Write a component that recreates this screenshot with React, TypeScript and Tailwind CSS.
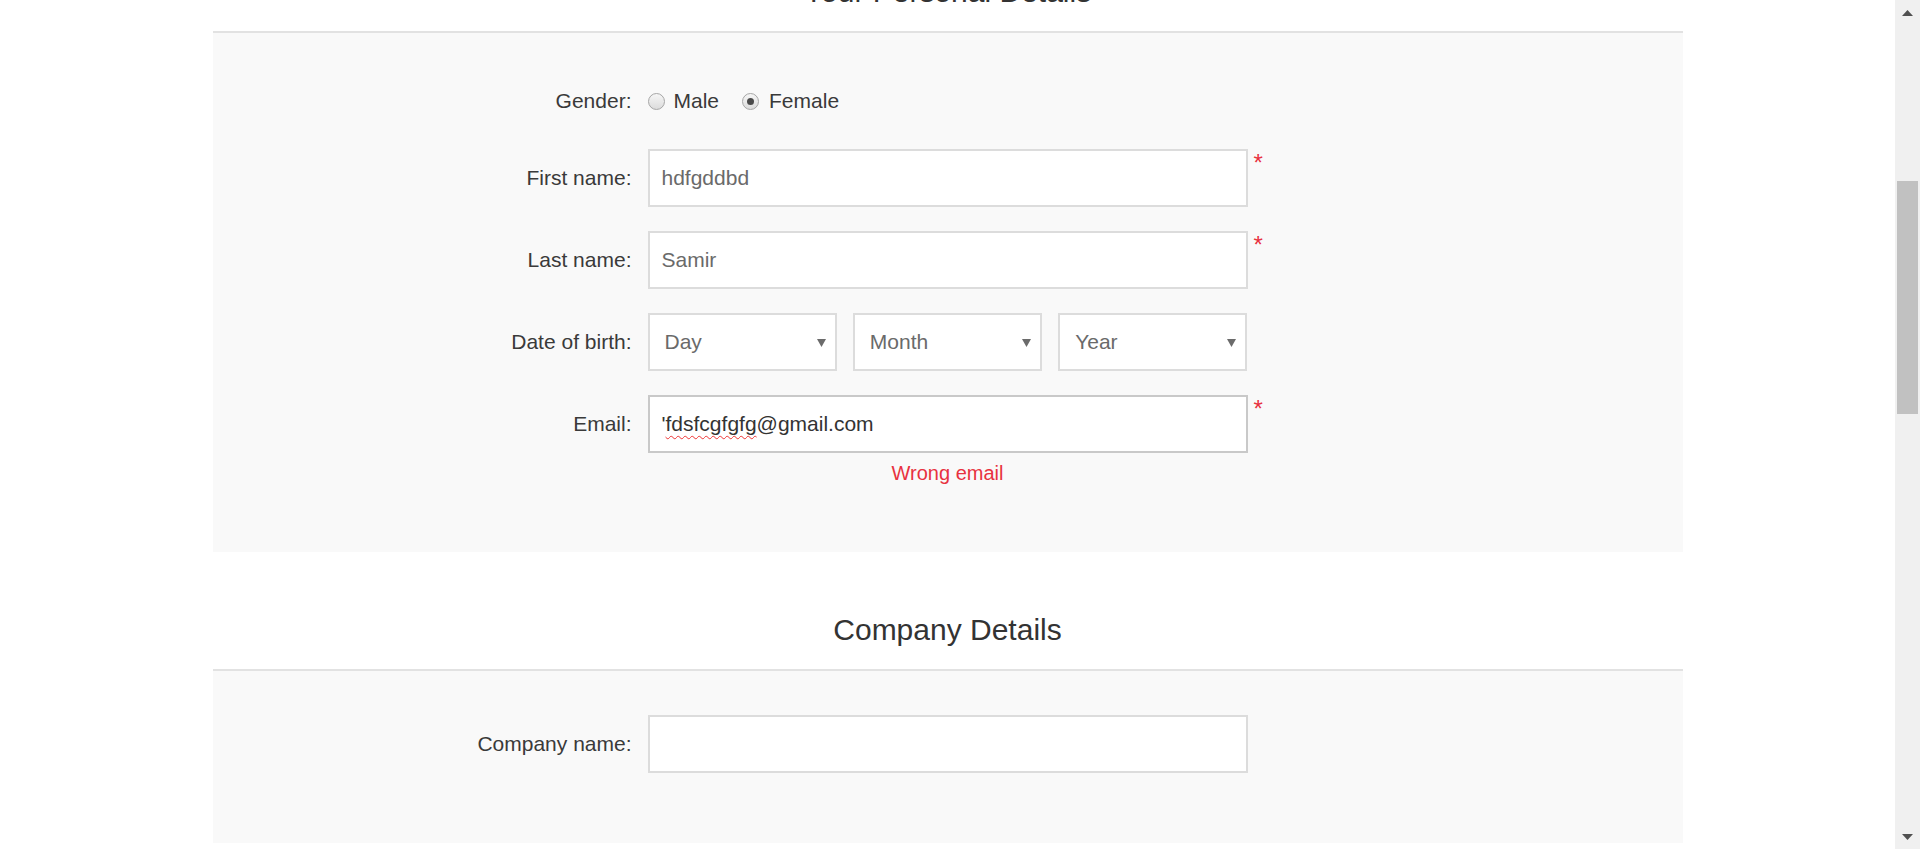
import React from "react";

function Radio({ checked }: { checked?: boolean }) {
  return (
    <span className="flex h-[17px] w-[17px] items-center justify-center rounded-full border border-[#a6a6a6] bg-gradient-to-b from-[#f6f6f6] to-[#dcdcdc]">
      {checked && <span className="h-[7px] w-[7px] rounded-full bg-[#4a4a4a]" />}
    </span>
  );
}

function Asterisk() {
  return <span className="ml-[6px] mt-[2px] text-[24px] leading-none text-[#e8323f]">*</span>;
}

function Row({
  label,
  required,
  children,
  className = "h-[58px]",
}: {
  label: string;
  required?: boolean;
  children: React.ReactNode;
  className?: string;
}) {
  return (
    <div className={`grid grid-cols-[1fr_600px_1fr] ${className}`}>
      <div className="flex items-center justify-end pr-4 text-[21px] text-[#3a3a3a]">{label}</div>
      <div className="flex h-full">{children}</div>
      <div className="flex items-start">{required && <Asterisk />}</div>
    </div>
  );
}

function TextBox({ value, dark }: { value?: React.ReactNode; dark?: boolean }) {
  return (
    <div
      className={`flex h-full w-full items-center border-2 bg-white px-3 text-[21px] ${
        dark ? "border-[#c9c9c9] text-[#333]" : "border-[#dcdcdc] text-[#6a6a6a]"
      }`}
    >
      {value}
    </div>
  );
}

function SelectBox({ placeholder }: { placeholder: string }) {
  return (
    <div className="flex h-full flex-1 items-center justify-between border-2 border-[#dcdcdc] bg-white pl-[15px] pr-[9px] text-[21px] text-[#6a6a6a]">
      <span>{placeholder}</span>
      <svg width="9" height="9" viewBox="0 0 9 9">
        <path d="M0 1 L9 1 L4.5 9 Z" fill="#6b6b6b" />
      </svg>
    </div>
  );
}

function Heading({ title, className = "" }: { title: string; className?: string }) {
  return (
    <div className={`border-b-2 border-[#e2e2e2] pb-6 text-center ${className}`}>
      <h2 className="h-[30px] text-[30px] leading-[30px] text-[#333]">{title}</h2>
    </div>
  );
}

function Scrollbar() {
  return (
    <div className="flex h-full w-[25px] shrink-0 flex-col items-center bg-[#f0f0f0]">
      <div className="flex h-[25px] w-full items-center justify-center">
        <svg width="11" height="6" viewBox="0 0 11 6">
          <path d="M0 6 L5.5 0 L11 6 Z" fill="#505050" />
        </svg>
      </div>
      <div className="mt-[156px] h-[233px] w-[21px] bg-[#c1c1c1]" />
      <div className="flex-1" />
      <div className="flex h-[25px] w-full items-center justify-center">
        <svg width="11" height="6" viewBox="0 0 11 6">
          <path d="M0 0 L11 0 L5.5 6 Z" fill="#505050" />
        </svg>
      </div>
    </div>
  );
}

export default function App() {
  return (
    <div className="flex h-[849px] w-full overflow-hidden bg-white font-['Liberation_Sans',Arial,sans-serif]">
      <div className="flex-1">
        <div className="mx-auto w-[1470px]">
          <Heading title="Your Personal Details" className="-mt-[23px]" />
          <div className="bg-[#f9f9f9] pb-[67px] pt-[44px]">
            <Row label="Gender:" className="h-[48px]">
              <div className="flex items-center text-[21px] text-[#3a3a3a]">
                <Radio />
                <span className="ml-[9px]">Male</span>
                <span className="ml-[23px]">
                  <Radio checked />
                </span>
                <span className="ml-[10px]">Female</span>
              </div>
            </Row>
            <div className="mt-6">
              <Row label="First name:" required>
                <TextBox value="hdfgddbd" />
              </Row>
            </div>
            <div className="mt-6">
              <Row label="Last name:" required>
                <TextBox value="Samir" />
              </Row>
            </div>
            <div className="mt-6">
              <Row label="Date of birth:">
                <div className="flex w-full gap-4">
                  <SelectBox placeholder="Day" />
                  <SelectBox placeholder="Month" />
                  <SelectBox placeholder="Year" />
                </div>
              </Row>
            </div>
            <div className="mt-6">
              <Row label="Email:" required>
                <TextBox
                  dark
                  value={
                    <>
                      <span>'</span>
                      <span className="underline decoration-[#e33] decoration-wavy decoration-1 underline-offset-[4px]">
                        fdsfcgfgfg
                      </span>
                      <span>@gmail.com</span>
                    </>
                  }
                />
              </Row>
            </div>
            <div className="mt-2 grid grid-cols-[1fr_600px_1fr]">
              <div />
              <div className="text-center text-[20px] leading-[24px] text-[#e8323f]">Wrong email</div>
              <div />
            </div>
          </div>

          <Heading title="Company Details" className="mt-[63px]" />
          <div className="bg-[#f9f9f9] pb-[70px] pt-[44px]">
            <Row label="Company name:">
              <TextBox />
            </Row>
          </div>
        </div>
      </div>
      <Scrollbar />
    </div>
  );
}
